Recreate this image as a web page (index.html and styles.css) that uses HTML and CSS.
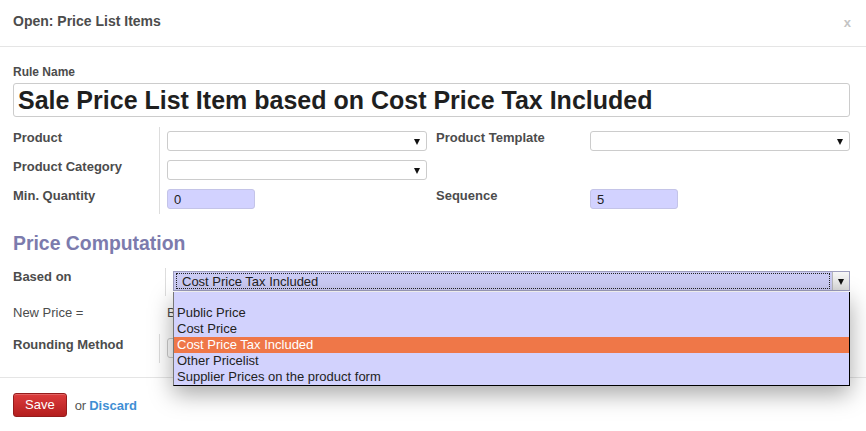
FILE: index.html
```html
<!DOCTYPE html>
<html>
<head>
<meta charset="utf-8">
<link rel="stylesheet" href="styles.css">
</head>
<body>
<div class="modal">
  <div class="m-header">
    <h4 class="m-title">Open: Price List Items</h4>
    <span class="m-close">x</span>
  </div>
  <div class="m-body">
    <div class="rule-label">Rule Name</div>
    <div class="name-input">Sale Price List Item based on Cost Price Tax Included</div>

    <div class="group1">
      <div class="lbl">Product</div>
      <div class="fld"><div class="sel"><span class="tri"></span></div></div>
      <div class="lbl2">Product Template</div>
      <div class="fld2"><div class="sel"><span class="tri"></span></div></div>

      <div class="lbl">Product Category</div>
      <div class="fld"><div class="sel"><span class="tri"></span></div></div>
      <div class="lbl2"></div>
      <div class="fld2"></div>

      <div class="lbl">Min. Quantity</div>
      <div class="fld"><div class="num">0</div></div>
      <div class="lbl2">Sequence</div>
      <div class="fld2"><div class="num">5</div></div>
    </div>

    <h3 class="section">Price Computation</h3>

    <div class="based-row">
      <div class="lbl-b">Based on</div>
      <div class="fld-b">
        <div class="combo">
          <div class="combo-val"><span class="focus">Cost Price Tax Included</span></div>
          <div class="combo-btn"><span class="tri"></span></div>
          <ul class="options">
            <li class="opt blank"></li>
            <li class="opt">Public Price</li>
            <li class="opt">Cost Price</li>
            <li class="opt active">Cost Price Tax Included</li>
            <li class="opt">Other Pricelist</li>
            <li class="opt">Supplier Prices on the product form</li>
          </ul>
        </div>
      </div>
    </div>

    <div class="newprice-row">
      <div class="np-label">New Price =</div>
      <div class="np-val">B</div>
    </div>

    <div class="round-row">
      <div class="lbl-r">Rounding Method</div>
      <div class="fld-r"><div class="round-input"></div></div>
    </div>
  </div>
  <div class="m-footer">
    <button class="btn-save">Save</button>
    <span class="or">or</span>
    <a class="discard">Discard</a>
  </div>
</div>
</body>
</html>
```

FILE: styles.css
```css
html, body {
  margin: 0;
  padding: 0;
  background: #ffffff;
}
body {
  font-family: "Liberation Sans", Arial, sans-serif;
  color: #4c4c4c;
  font-size: 13px;
}
.modal {
  width: 866px;
  height: 431px;
  overflow: hidden;
  background: #fff;
}
.m-header {
  height: 46px;
  border-bottom: 1px solid #e5e5e5;
  display: flex;
  align-items: flex-start;
  justify-content: space-between;
  padding: 0 15px 0 13px;
}
.m-title {
  margin: 13px 0 0 0;
  font-size: 14px;
  line-height: 17px;
  font-weight: bold;
  color: #4c4c4c;
}
.m-close {
  margin-top: 14px;
  font-size: 13px;
  line-height: 17px;
  font-weight: bold;
  color: #c4c4c4;
}
.m-body {
  padding: 18px 16px 0 13px;
}
.rule-label {
  font-size: 12px;
  font-weight: bold;
  line-height: 14px;
}
.name-input {
  margin-top: 4px;
  height: 32px;
  border: 1px solid #cccccc;
  border-radius: 3px;
  padding: 0 4px;
  font-size: 25px;
  line-height: 32px;
  font-weight: bold;
  color: #1f1f1f;
  white-space: nowrap;
}
.group1 {
  margin-top: 10px;
  display: grid;
  grid-template-columns: 147px 267px 163px 260px;
  grid-auto-rows: 29px;
}
.lbl {
  border-right: 1px solid #dddddd;
  padding-top: 3px;
  font-weight: bold;
  line-height: 16px;
}
.fld {
  padding-left: 7px;
  padding-top: 4px;
}
.lbl2 {
  padding-left: 9px;
  padding-top: 3px;
  font-weight: bold;
  line-height: 16px;
}
.fld2 {
  padding-top: 4px;
}
.sel {
  height: 18px;
  border: 1px solid #cccccc;
  border-radius: 3px;
  background: #ffffff;
  display: flex;
  justify-content: flex-end;
  align-items: center;
  padding-right: 6px;
}
.tri {
  display: inline-block;
  width: 0;
  height: 0;
  border-left: 3.5px solid transparent;
  border-right: 3.5px solid transparent;
  border-top: 6px solid #111111;
  margin-top: 2px;
}
.num {
  width: 80px;
  height: 18px;
  border: 1px solid #c4c4e8;
  border-radius: 3px;
  background: #d2d2ff;
  padding-left: 6px;
  font-size: 13px;
  line-height: 20px;
  color: #222222;
}
.section {
  margin: 17px 0 0 0;
  font-size: 19.4px;
  line-height: 24px;
  font-weight: bold;
  color: #7c7bad;
}
.based-row {
  margin-top: 13px;
  display: flex;
  height: 28px;
}
.lbl-b {
  width: 152px;
  flex: none;
  border-right: 1px solid #dddddd;
  font-weight: bold;
  line-height: 16px;
  padding-top: 1px;
}
.fld-b {
  flex: 1;
  padding-left: 7px;
  padding-top: 3px;
}
.combo {
  position: relative;
  height: 18px;
  border: 1px solid #9e9ebe;
  background: #cbcbf4;
  display: flex;
}
.combo-val {
  flex: 1;
  padding: 1px 2px;
}
.focus {
  display: block;
  height: 14px;
  border: 1px dotted #222;
  padding-left: 5px;
  font-size: 13px;
  line-height: 16px;
  color: #222;
}
.combo-btn {
  width: 16px;
  flex: none;
  background: linear-gradient(#f6f6f6, #dcdcdc);
  border-left: 1px solid #b8b8b8;
  display: flex;
  align-items: center;
  justify-content: center;
}
.options {
  position: absolute;
  left: -1px;
  right: -1px;
  top: 20px;
  margin: 0;
  padding: 0;
  list-style: none;
  background: #d2d2fd;
  border-left: 1px solid #777;
  border-right: 1px solid #000;
  border-bottom: 1px solid #000;
  box-shadow: 0 8px 22px rgba(0, 0, 0, 0.35);
  z-index: 5;
}
.opt {
  height: 16px;
  line-height: 16px;
  padding-left: 3px;
  font-size: 13px;
  color: #222;
  white-space: nowrap;
}
.opt.blank {
  height: 13px;
}
.opt.active {
  background: #ef7748;
  color: #ffffff;
}
.newprice-row {
  display: flex;
  height: 38px;
}
.np-label {
  width: 154px;
  flex: none;
  padding-top: 9px;
  line-height: 16px;
}
.np-val {
  padding-top: 9px;
  line-height: 16px;
}
.round-row {
  display: flex;
  height: 29px;
}
.lbl-r {
  width: 147px;
  flex: none;
  border-right: 1px solid #dddddd;
  font-weight: bold;
  line-height: 16px;
  padding-top: 3px;
  box-sizing: border-box;
}
.fld-r {
  padding-left: 7px;
  padding-top: 4px;
}
.round-input {
  width: 80px;
  height: 18px;
  border: 1px solid #cccccc;
  border-radius: 3px;
}
.m-footer {
  margin-top: 14px;
  border-top: 1px solid #e5e5e5;
  padding: 15px 13px 0 13px;
  display: flex;
  align-items: center;
}
.btn-save {
  height: 24px;
  padding: 0 11px;
  border: 1px solid #951c1c;
  border-radius: 3px;
  background: linear-gradient(#dc3c3c, #b41e1e);
  color: #ffffff;
  font-family: "Liberation Sans", Arial, sans-serif;
  font-size: 13px;
  line-height: 22px;
  box-shadow: inset 0 1px 0 rgba(255,255,255,0.2);
}
.or {
  margin-left: 8px;
  color: #555555;
}
.discard {
  margin-left: 3px;
  font-weight: bold;
  color: #3f8fd4;
}
```
